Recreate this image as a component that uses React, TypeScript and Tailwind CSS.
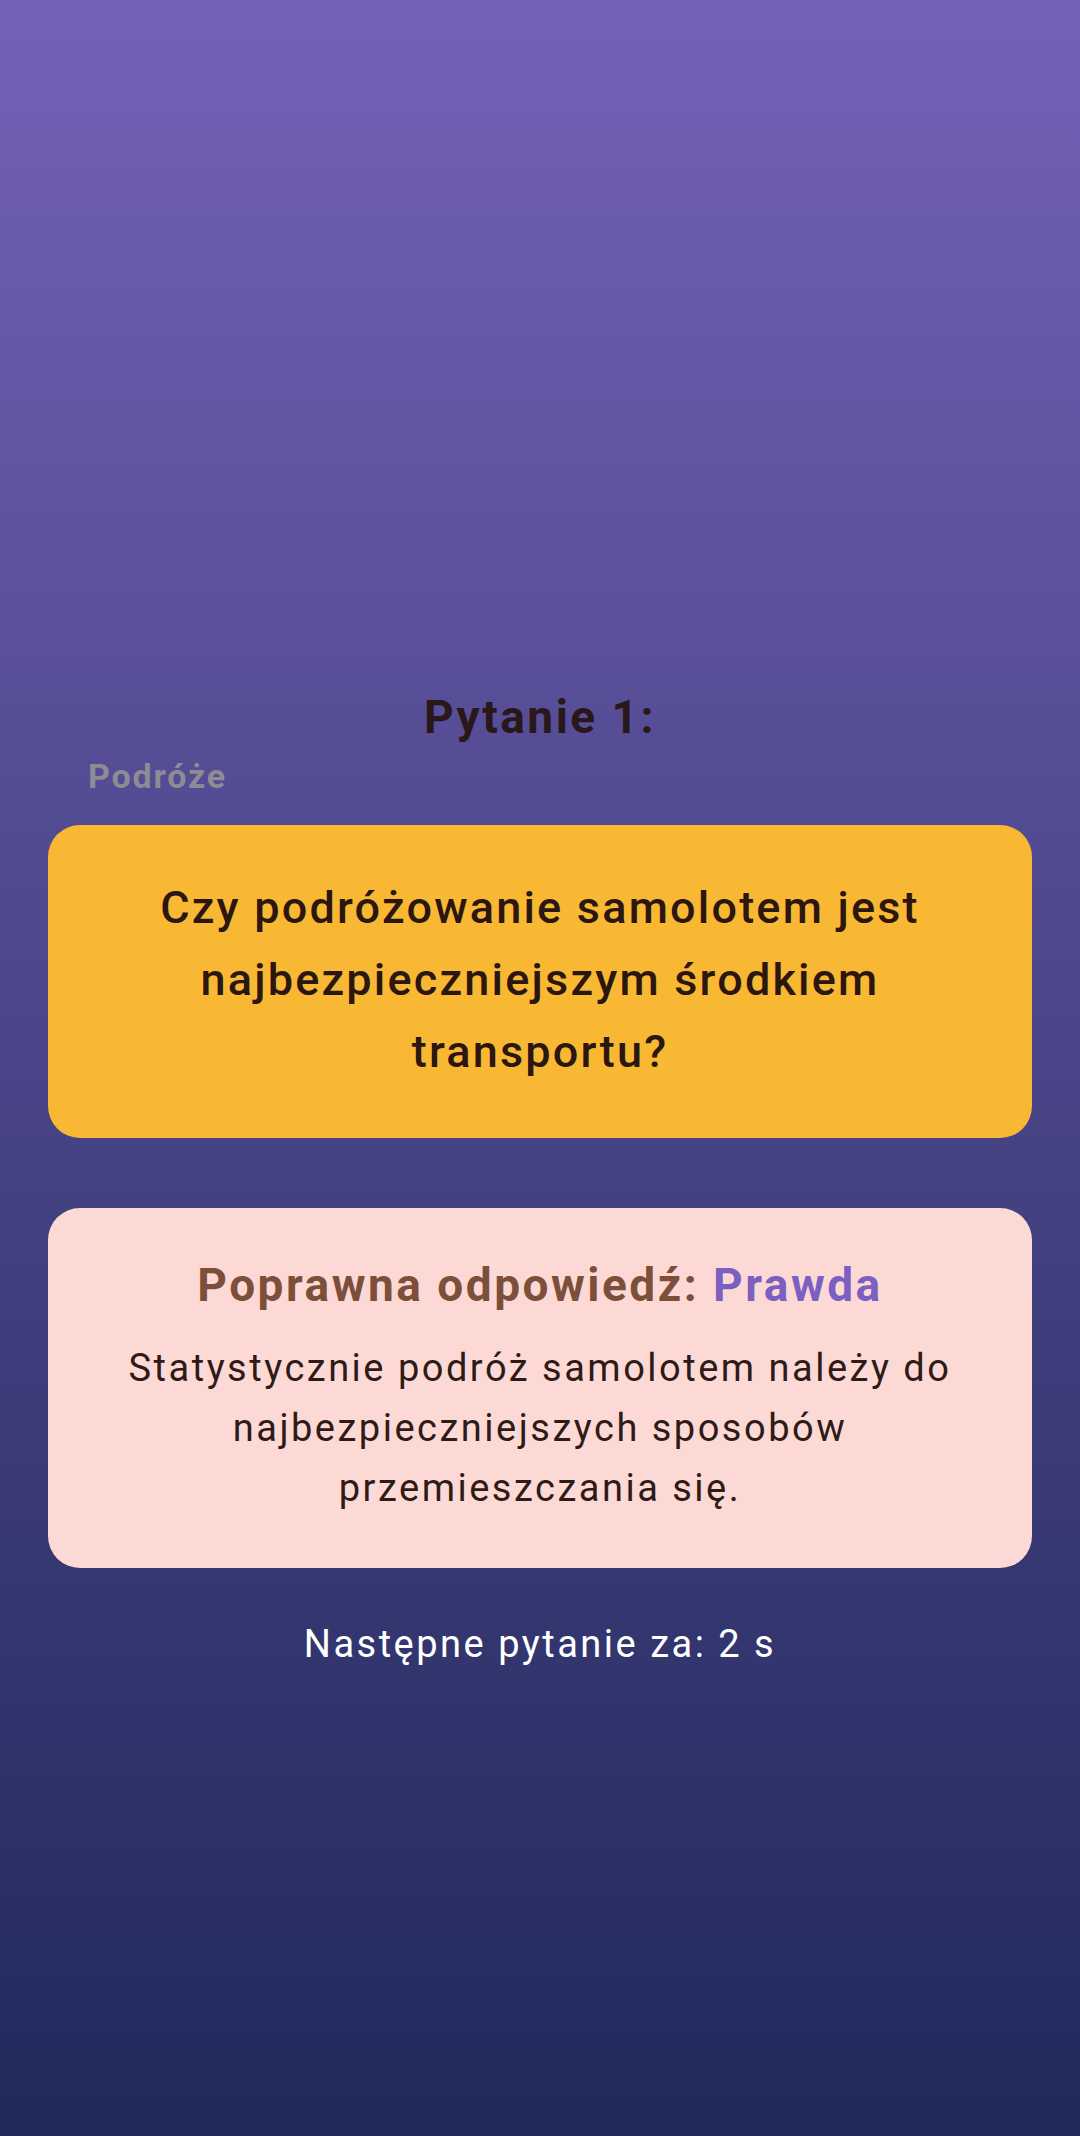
export default function App() {
  return (
    <div
      className="flex flex-col min-h-[2136px] w-full bg-gradient-to-b from-[#7461b8] to-[#20295a] pt-[689px]"
      style={{ fontFamily: 'Roboto, "Noto Sans", sans-serif' }}
    >
      {/* Question header */}
      <h1 className="text-center text-[46px] leading-[56px] font-bold tracking-[2.5px] text-[#2a1719]">Pytanie 1:</h1>
      <p className="mt-[11px] pl-[88px] text-[34px] leading-[40px] font-bold tracking-[1.8px] text-[#8d8b93]">Podróże</p>

      {/* Question card */}
      <div className="mt-[29px] mx-[48px] rounded-[32px] bg-[#f8b833] px-[56px] pt-[47px] pb-[50px]">
        <p className="text-center text-[45px] leading-[72px] font-medium tracking-[2.2px] text-[#2b1610]">
          Czy podróżowanie samolotem jest najbezpieczniejszym środkiem transportu?
        </p>
      </div>

      {/* Answer card */}
      <div className="mt-[70px] mx-[48px] rounded-[32px] bg-[#fdd9d5] px-[56px] pt-[49px] pb-[50px]">
        <p className="text-center text-[46px] leading-[56px] font-bold tracking-[2.5px] text-[#7c4f3b]">
          Poprawna odpowiedź: <span className="text-[#7b5fc1]">Prawda</span>
        </p>
        <p className="mt-[25px] text-center text-[38px] leading-[60px] tracking-[2.5px] text-[#2e1b17]">
          Statystycznie podróż samolotem należy do najbezpieczniejszych sposobów przemieszczania się.
        </p>
      </div>

      <p className="mt-[51px] text-center text-[38px] leading-[50px] tracking-[2.5px] text-white">Następne pytanie za: 2 s</p>
    </div>
  );
}
